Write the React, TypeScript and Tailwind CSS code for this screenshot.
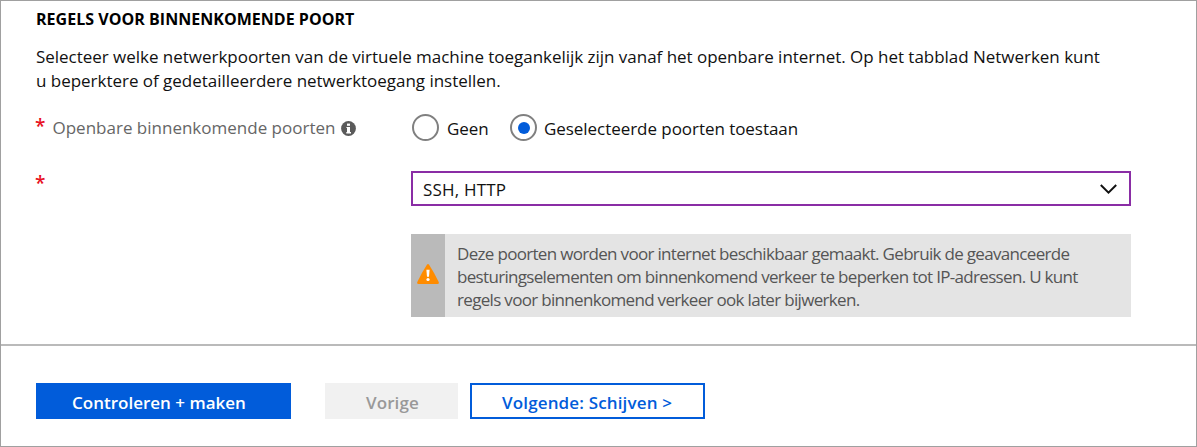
import React from 'react';

function Required() {
  return (
    <span className="-mt-0.5 -ml-px block h-6 w-[17.5px] text-[19px] leading-6 font-semibold text-[#e81123]">*</span>
  );
}

function InfoIcon() {
  return (
    <svg width="15" height="15" viewBox="0 0 15 15" className="shrink-0">
      <circle cx="7.5" cy="7.5" r="7.4" fill="#5a5a5a" />
      <rect x="6" y="2.6" width="3" height="2.2" fill="#fff" />
      <path d="M5.4 5.9H9v5.2h1v1.3H5.3v-1.3H6V7.1h-.6z" fill="#fff" />
    </svg>
  );
}

function WarningIcon() {
  return (
    <svg width="22" height="20" viewBox="0 0 22 20">
      <path
        d="M9.9 0.7Q11 -0.6 12.1 0.7Q17.5 9 21.7 18Q22.3 20 20.5 20H1.5Q-0.3 20 0.3 18Q4.5 9 9.9 0.7Z"
        fill="#ff8c00"
      />
      <path d="M9.4 5.8h3.2l-.6 7h-2z" fill="#fff" />
      <circle cx="11" cy="15.5" r="1.6" fill="#fff" />
    </svg>
  );
}

function Radio({ checked = false }: { checked?: boolean }) {
  return (
    <span className="flex size-[27px] shrink-0 items-center justify-center rounded-full border-2 border-[#808080] bg-white">
      {checked && <span className="size-3 rounded-full bg-[#015cda]" />}
    </span>
  );
}

export default function App() {
  return (
    <main className="h-[447px] w-[1197px] overflow-hidden border border-[#a0a0a0] bg-white font-['Open_Sans','Noto_Sans',sans-serif] text-[17px] leading-6 whitespace-nowrap text-[#111]">
      <section className="h-[343px] pt-1.5 pl-[35px]">
        <h1 className="text-[16px] leading-6 font-bold tracking-[0.03px] text-black">
          REGELS VOOR BINNENKOMENDE POORT
        </h1>
        <p className="mt-3.5 tracking-[-0.026px]">
          Selecteer welke netwerkpoorten van de virtuele machine toegankelijk zijn vanaf het openbare
          internet. Op het tabblad Netwerken kunt
          <br />
          u beperktere of gedetailleerdere netwerktoegang instellen.
        </p>

        <div className="mt-[21px] flex h-[27px]">
          <div className="flex w-[376px] pt-0.5">
            <Required />
            <span className="text-[#666]">Openbare binnenkomende poorten</span>
            <span className="ml-1.5 pt-[5px]">
              <InfoIcon />
            </span>
          </div>
          <label className="flex w-[98px]">
            <Radio />
            <span className="ml-2 pt-[3px] tracking-[-0.1px]">Geen</span>
          </label>
          <label className="flex">
            <Radio checked />
            <span className="ml-[7px] pt-[3px] tracking-[-0.05px]">Geselecteerde poorten toestaan</span>
          </label>
        </div>

        <div className="mt-[30px] flex">
          <div className="w-[375px] pt-0.5">
            <Required />
          </div>
          <div className="flex h-[35px] w-[720px] items-start justify-between border-2 border-[#8a2da5] pt-[5px] pr-3 pl-2.5">
            <span className="tracking-[0.2px]">SSH, HTTP</span>
            <svg width="17" height="10" viewBox="0 0 17 10" fill="none" className="mt-1.5">
              <path d="M0.8 1L8.5 8.6L16.2 1" stroke="#111" strokeWidth="2" />
            </svg>
          </div>
        </div>

        <div className="mt-7 ml-[375px] flex h-[83px] w-[720px] bg-[#e4e4e4]">
          <div className="flex w-[34px] items-center justify-center bg-[#bababa] pb-[3px]">
            <WarningIcon />
          </div>
          <p className="pt-2 pl-3 leading-[23px] tracking-[-0.68px] text-[#555]">
            Deze poorten worden voor internet beschikbaar gemaakt. Gebruik de geavanceerde
            <br />
            besturingselementen om binnenkomend verkeer te beperken tot IP-adressen. U kunt
            <br />
            regels voor binnenkomend verkeer ook later bijwerken.
          </p>
        </div>
      </section>

      <footer className="flex border-t-2 border-[#bababa] pt-[37px] pl-[35px] font-semibold">
        <button className="flex h-9 w-[255px] justify-start bg-[#015cda] pt-2 pl-9 text-white">
          Controleren + maken
        </button>
        <button className="ml-[34px] flex h-9 w-[133px] justify-start bg-[#f1f1f1] pt-2 pl-[41px] tracking-[0.1px] text-[#999]">
          Vorige
        </button>
        <button className="ml-3 flex h-9 w-[235px] justify-start border-2 border-[#015cda] bg-white pt-1.5 pl-[30px] tracking-[0.15px] text-[#015cda]">
          Volgende: Schijven &gt;
        </button>
      </footer>
    </main>
  );
}
